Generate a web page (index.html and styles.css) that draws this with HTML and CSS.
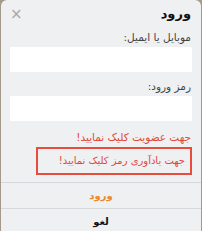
FILE: index.html
```html
<!DOCTYPE html>
<html lang="fa" dir="rtl">
<head>
<meta charset="utf-8">
<link rel="stylesheet" href="styles.css">
</head>
<body>
<div class="dialog">
  <div class="header">
    <div class="title">ورود</div>
    <div class="close">×</div>
  </div>
  <div class="content">
    <div class="label">موبایل یا ایمیل:</div>
    <div class="input"></div>
    <div class="label">رمز ورود:</div>
    <div class="input"></div>
    <div class="link">جهت عضویت کلیک نمایید!</div>
    <div class="link boxed">جهت یادآوری رمز کلیک نمایید!</div>
  </div>
  <div class="btn primary">ورود</div>
  <div class="btn">لغو</div>
</div>
</body>
</html>
```
FILE: styles.css
```css
html, body {
  margin: 0;
  padding: 0;
  height: 231px;
  overflow: hidden;
  background: #a39a8c;
}
body {
  font-family: "DejaVu Sans", sans-serif;
  padding: 0 1px;
}
.dialog {
  background: #eef0f2;
  border-radius: 6px;
  height: 240px;
  display: flex;
  flex-direction: column;
}
.header {
  display: flex;
  justify-content: space-between;
  align-items: center;
  padding: 3px 10px 0 9px;
  height: 21px;
}
.title {
  font-size: 13px;
  font-weight: bold;
  color: #111;
}
.close {
  font-size: 15px;
  color: #a8a8a8;
}
.content {
  padding: 0 9px 0 9px;
}
.label {
  font-size: 10.5px;
  color: #444;
  height: 14px;
  line-height: 14px;
  margin-top: 6px;
  margin-right: 1px;
  margin-bottom: 3px;
}
.input + .label {
  margin-top: 7px;
}
.input {
  background: #fff;
  height: 25px;
  border-radius: 1px;
}
.link {
  color: #e0483c;
  font-size: 10.5px;
  height: 16px;
  line-height: 16px;
  margin-top: 8px;
  padding-right: 1px;
}
.link.boxed {
  margin-top: 2px;
  margin-left: 26px;
  height: 24px;
  line-height: 24px;
  border: 2px solid #e74c3c;
  padding-right: 5px;
  font-size: 10px;
}
.btn {
  border-top: 1px solid #d6d8db;
  height: 25px;
  line-height: 25px;
  text-align: center;
  font-size: 10px;
  font-weight: bold;
  color: #111;
}
.content + .btn {
  margin-top: 7px;
}
.btn.primary {
  color: #e8892e;
}
```
